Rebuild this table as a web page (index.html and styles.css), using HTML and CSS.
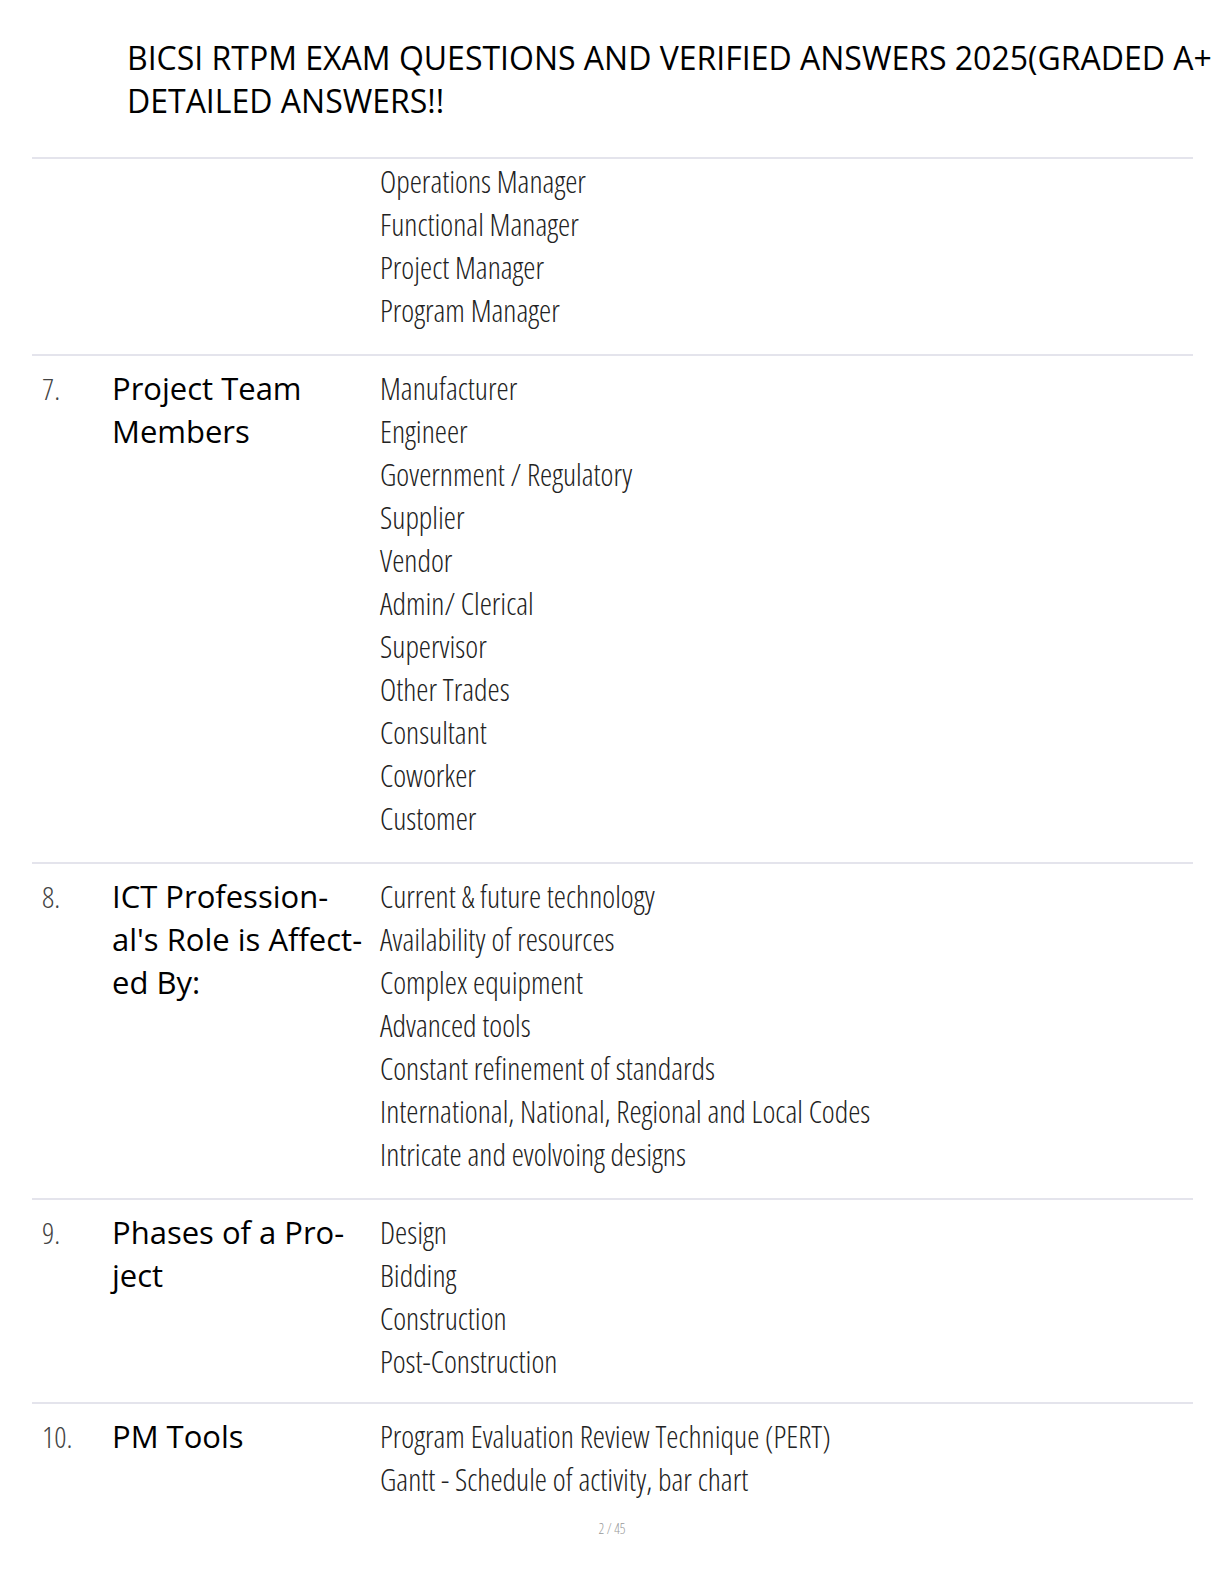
FILE: index.html
```html
<!DOCTYPE html>
<html lang="en">
<head>
    <meta charset="UTF-8">
    <meta name="viewport" content="width=device-width, initial-scale=1.0">
    <title>BICSI RTPM Exam Questions</title>
    <link rel="stylesheet" href="styles.css">
</head>
<body>
    <h1 class="title">BICSI RTPM EXAM QUESTIONS AND VERIFIED ANSWERS 2025(GRADED A+<br>DETAILED ANSWERS!!</h1>

    <div class="qa-table">
        <!-- continued from page 1 -->
        <div class="qa-row qa-row--cont">
            <div class="qa-num"></div>
            <div class="qa-question"></div>
            <ul class="qa-answers">
                <li>Operations Manager</li>
                <li>Functional Manager</li>
                <li>Project Manager</li>
                <li>Program Manager</li>
            </ul>
        </div>

        <div class="qa-row">
            <div class="qa-num">7.</div>
            <div class="qa-question">Project Team<br>Members</div>
            <ul class="qa-answers">
                <li>Manufacturer</li>
                <li>Engineer</li>
                <li>Government / Regulatory</li>
                <li>Supplier</li>
                <li>Vendor</li>
                <li>Admin/ Clerical</li>
                <li>Supervisor</li>
                <li>Other Trades</li>
                <li>Consultant</li>
                <li>Coworker</li>
                <li>Customer</li>
            </ul>
        </div>

        <div class="qa-row">
            <div class="qa-num">8.</div>
            <div class="qa-question">ICT Profession-<br>al's Role is Affect-<br>ed By:</div>
            <ul class="qa-answers">
                <li>Current &amp; future technology</li>
                <li>Availability of resources</li>
                <li>Complex equipment</li>
                <li>Advanced tools</li>
                <li>Constant refinement of standards</li>
                <li>International, National, Regional and Local Codes</li>
                <li>Intricate and evolvoing designs</li>
            </ul>
        </div>

        <div class="qa-row qa-row--short">
            <div class="qa-num">9.</div>
            <div class="qa-question">Phases of a Pro-<br>ject</div>
            <ul class="qa-answers">
                <li>Design</li>
                <li>Bidding</li>
                <li>Construction</li>
                <li>Post-Construction</li>
            </ul>
        </div>

        <div class="qa-row qa-row--last">
            <div class="qa-num">10.</div>
            <div class="qa-question">PM Tools</div>
            <ul class="qa-answers">
                <li>Program Evaluation Review Technique (PERT)</li>
                <li>Gantt - Schedule of activity, bar chart</li>
            </ul>
        </div>
    </div>

    <p class="page-num">2 / 45</p>
</body>
</html>
```

FILE: styles.css
```css
body {
    margin: 0;
    padding: 0;
    background-color: #fff;
    font-family: "Open Sans", "Liberation Sans", sans-serif;
    color: #000;
    overflow: hidden;
}

.title {
    margin: 0;
    padding: 36px 0 0 127px;
    font-size: 32px;
    font-weight: normal;
    line-height: 43px;
    white-space: nowrap;
}

.qa-table {
    margin: 35px 31px 0 32px;
}

.qa-row {
    display: grid;
    grid-template-columns: 70px 268px 1fr;
    padding: 11px 0 22px 10px;
    border-top: 2px solid #e4e4ec;
    line-height: 43px;
}

.qa-row--cont { padding-top: 1px; }
.qa-row--short { padding-bottom: 19px; }
.qa-row--last { padding-bottom: 0; }

.qa-num,
.qa-answers,
.page-num {
    font-weight: 300;
    font-stretch: 75%;
}

.qa-num {
    font-size: 30px;
    color: #444;
}

.qa-question {
    font-size: 31px;
}

.qa-answers {
    list-style: none;
    margin: 0;
    padding: 0;
    font-size: 30.8px;
    color: #222;
}

.page-num {
    margin: 18px 0 0;
    text-align: center;
    font-size: 14px;
    color: #999;
}
```
